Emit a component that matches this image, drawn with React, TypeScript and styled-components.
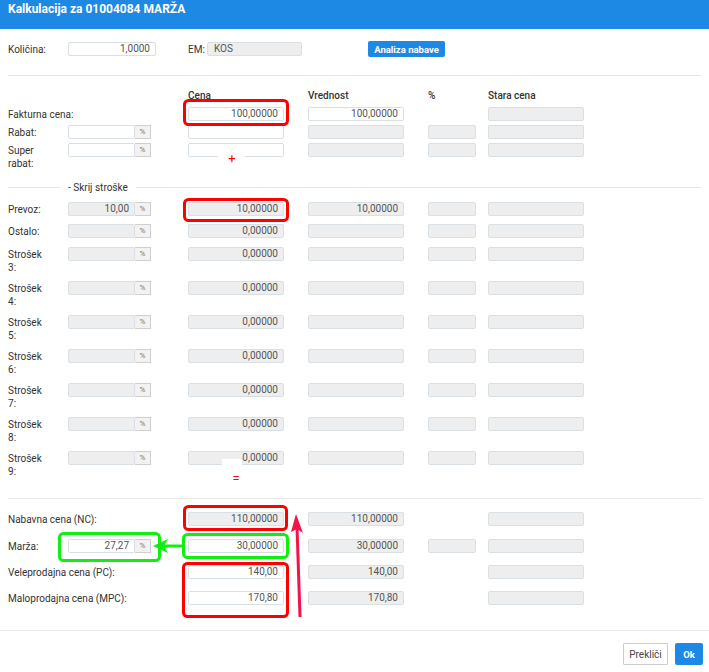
import React from 'react';
import styled, { createGlobalStyle } from 'styled-components';

const GlobalStyle = createGlobalStyle`
  html, body {
    margin: 0;
    padding: 0;
    background: #fff;
  }
  body {
    font-family: Roboto, 'Liberation Sans', Arial, sans-serif;
    color: #333;
  }
`;

const BLUE = '#1e88e5';

const Page = styled.div`
  position: relative;
  width: 709px;
  height: 672px;
  overflow: hidden;
  display: flex;
  flex-direction: column;
  background: #fff;
`;

const Header = styled.div`
  height: 29px;
  box-sizing: border-box;
  padding: 1px 8px 0;
  background: ${BLUE};
  color: #fff;
  font-size: 12px;
  font-weight: 700;
  line-height: 16px;
`;

const Body = styled.div`
  flex: 1;
  padding: 12px 8px 0;
`;

const TopRow = styled.div`
  display: flex;
  align-items: center;
  height: 16px;
  font-size: 10px;
`;

const TopLabel = styled.span<{ $w: number; $ml?: number }>`
  width: ${({ $w }) => $w}px;
  margin-left: ${({ $ml }) => $ml ?? 0}px;
  flex-shrink: 0;
`;

const Field = styled.div<{ $gray?: boolean; $w?: number; $left?: boolean }>`
  box-sizing: border-box;
  width: ${({ $w }) => $w ?? 96}px;
  height: 14px;
  border: 1px solid #d8dfe5;
  border-radius: 2px;
  background: ${({ $gray }) => ($gray ? '#eeeeee' : '#fff')};
  color: #555;
  font-size: 10px;
  line-height: 12px;
  text-align: ${({ $left }) => ($left ? 'left' : 'right')};
  padding: 0 5px 0 ${({ $left }) => ($left ? 6 : 5)}px;
  white-space: nowrap;
  overflow: hidden;
`;

const BlueButton = styled.div<{ $w: number; $h: number; $ml?: number }>`
  box-sizing: border-box;
  width: ${({ $w }) => $w}px;
  height: ${({ $h }) => $h}px;
  margin-left: ${({ $ml }) => $ml ?? 0}px;
  background: ${BLUE};
  border-radius: 2px;
  color: #fff;
  font-size: 9.5px;
  font-weight: 700;
  display: flex;
  align-items: center;
  justify-content: center;
`;

const Divider = styled.div<{ $mt: number; $mb: number }>`
  height: 1px;
  background: #e6e6e6;
  margin: ${({ $mt }) => $mt}px 0 ${({ $mb }) => $mb}px;
`;

const Row = styled.div<{ $mb: number }>`
  display: grid;
  grid-template-columns: 60px 120px 120px 120px 60px 96px;
  align-items: start;
  margin-bottom: ${({ $mb }) => $mb}px;
  font-size: 10px;
`;

const Cell = styled.div<{ $col: number; $span?: number }>`
  grid-column: ${({ $col, $span }) => `${$col} / span ${$span ?? 1}`};
  grid-row: 1;
`;

const Label = styled.div`
  line-height: 13px;
  padding-top: 1px;
  margin-bottom: -1px;
  color: #333;
  white-space: nowrap;
`;

const ColHead = styled.div`
  font-weight: 500;
  line-height: 13px;
  color: #333;
`;

const PctWrap = styled.div`
  display: flex;
  width: 83px;
`;

const Addon = styled.div`
  box-sizing: border-box;
  width: 16px;
  height: 14px;
  border: 1px solid #cfcfcf;
  border-left: none;
  background: #f2f2f2;
  color: #777;
  font-size: 8px;
  line-height: 12px;
  text-align: center;
`;

const Legend = styled.div`
  display: flex;
  align-items: center;
  height: 14px;
  margin-bottom: 8px;
  font-size: 10px;
`;

const LegendLine = styled.div<{ $w?: number }>`
  height: 1px;
  background: #e6e6e6;
  width: ${({ $w }) => ($w ? `${$w}px` : 'auto')};
  flex: ${({ $w }) => ($w ? '0 0 auto' : '1')};
`;

const LegendText = styled.span`
  margin: 0 8px;
  color: #333;
`;

const Footer = styled.div`
  border-top: 1px solid #e6e6e6;
  padding: 12px 6px 7px;
  display: flex;
  justify-content: flex-end;
  gap: 7px;
`;

const CancelButton = styled.div`
  box-sizing: border-box;
  width: 45px;
  height: 22px;
  border: 1px solid #cccccc;
  border-radius: 1px;
  background: #fff;
  color: #444;
  font-size: 10px;
  display: flex;
  align-items: center;
  justify-content: center;
`;

const Overlay = styled.svg`
  position: absolute;
  left: 0;
  top: 0;
  pointer-events: none;
`;

type Val = string | null | undefined;

interface LineProps {
  label: React.ReactNode;
  wide?: boolean;
  mb: number;
  pct?: { value?: string; gray?: boolean };
  cena?: { value?: string; gray?: boolean };
  vrednost?: { value?: string; gray?: boolean };
  pctCol?: boolean;
  stara?: boolean;
}

const Line: React.FC<LineProps> = ({ label, wide, mb, pct, cena, vrednost, pctCol, stara = true }) => (
  <Row $mb={mb}>
    <Cell $col={1} $span={wide ? 2 : 1}>
      <Label>{label}</Label>
    </Cell>
    {pct && (
      <Cell $col={2}>
        <PctWrap>
          <Field $w={67} $gray={pct.gray}>{pct.value as Val}</Field>
          <Addon>%</Addon>
        </PctWrap>
      </Cell>
    )}
    {cena && (
      <Cell $col={3}>
        <Field $gray={cena.gray}>{cena.value as Val}</Field>
      </Cell>
    )}
    {vrednost && (
      <Cell $col={4}>
        <Field $gray={vrednost.gray}>{vrednost.value as Val}</Field>
      </Cell>
    )}
    {pctCol && (
      <Cell $col={5}>
        <Field $w={48} $gray />
      </Cell>
    )}
    {stara && (
      <Cell $col={6}>
        <Field $gray />
      </Cell>
    )}
  </Row>
);

const costs = [3, 4, 5, 6, 7, 8, 9];

const App: React.FC = () => {
  return (
    <>
      <GlobalStyle />
      <Page>
        <Header>Kalkulacija za 01004084 MARŽA</Header>
        <Body>
          <TopRow>
            <TopLabel $w={60}>Količina:</TopLabel>
            <Field $w={88}>1,0000</Field>
            <TopLabel $w={19} $ml={32}>EM:</TopLabel>
            <Field $w={95} $gray $left>
              KOS
            </Field>
            <BlueButton $w={77} $h={16} $ml={66}>
              Analiza nabave
            </BlueButton>
          </TopRow>

          <Divider $mt={18} $mb={13} />

          <Row $mb={5}>
            <Cell $col={3}>
              <ColHead>Cena</ColHead>
            </Cell>
            <Cell $col={4}>
              <ColHead>Vrednost</ColHead>
            </Cell>
            <Cell $col={5}>
              <ColHead>%</ColHead>
            </Cell>
            <Cell $col={6}>
              <ColHead>Stara cena</ColHead>
            </Cell>
          </Row>

          <Line
            label="Fakturna cena:"
            wide
            mb={4}
            cena={{ value: '100,00000' }}
            vrednost={{ value: '100,00000' }}
          />
          <Line
            label="Rabat:"
            mb={4}
            pct={{}}
            cena={{}}
            vrednost={{ gray: true }}
            pctCol
          />
          <Line
            label={
              <>
                Super
                <br />
                rabat:
              </>
            }
            mb={11}
            pct={{}}
            cena={{}}
            vrednost={{ gray: true }}
            pctCol
          />

          <Legend>
            <LegendLine $w={52} />
            <LegendText>- Skrij stroške</LegendText>
            <LegendLine />
          </Legend>

          <Line
            label="Prevoz:"
            mb={8}
            pct={{ value: '10,00', gray: true }}
            cena={{ value: '10,00000', gray: true }}
            vrednost={{ value: '10,00000', gray: true }}
            pctCol
          />
          <Line
            label="Ostalo:"
            mb={9}
            pct={{ gray: true }}
            cena={{ value: '0,00000', gray: true }}
            vrednost={{ gray: true }}
            pctCol
          />
          {costs.map(n => (
            <Line
              key={n}
              label={
                <>
                  Strošek
                  <br />
                  {n}:
                </>
              }
              mb={n === 9 ? 0 : 8}
              pct={{ gray: true }}
              cena={{ value: '0,00000', gray: true }}
              vrednost={{ gray: true }}
              pctCol
            />
          ))}

          <Divider $mt={21} $mb={13} />

          <Line
            label="Nabavna cena (NC):"
            wide
            mb={13}
            cena={{ value: '110,00000', gray: true }}
            vrednost={{ value: '110,00000', gray: true }}
          />
          <Line
            label="Marža:"
            mb={12}
            pct={{ value: '27,27' }}
            cena={{ value: '30,00000' }}
            vrednost={{ value: '30,00000', gray: true }}
            pctCol
          />
          <Line
            label="Veleprodajna cena (PC):"
            wide
            mb={12}
            cena={{ value: '140,00' }}
            vrednost={{ value: '140,00', gray: true }}
          />
          <Line
            label="Maloprodajna cena (MPC):"
            wide
            mb={0}
            cena={{ value: '170,80' }}
            vrednost={{ value: '170,80', gray: true }}
          />
        </Body>
        <Footer>
          <CancelButton>Prekliči</CancelButton>
          <BlueButton $w={28} $h={22}>
            Ok
          </BlueButton>
        </Footer>

        <Overlay width="709" height="672" viewBox="0 0 709 672">
          <g fill="none" strokeWidth="3">
            <rect x="184.5" y="100.5" width="103" height="24" rx="4" stroke="#ff0000" />
            <rect x="184.5" y="199.5" width="103" height="21" rx="4" stroke="#ff0000" />
            <rect x="184.5" y="506.5" width="102" height="23" rx="4" stroke="#ff0000" />
            <rect x="183.5" y="563.5" width="104" height="53" rx="4" stroke="#ff0000" />
            <rect x="183.5" y="534.5" width="104" height="23" rx="4" stroke="#11ee11" />
            <rect x="59.5" y="533.5" width="100" height="27" rx="4" stroke="#11ee11" />
          </g>
          <line x1="164" y1="546" x2="182" y2="546" stroke="#11ee11" strokeWidth="3" />
          <polygon points="153,546 168,539 164,546 168,553" fill="#11ee11" />
          <line x1="300" y1="617" x2="297" y2="527" stroke="#f5124a" strokeWidth="3" />
          <polygon points="296,514 303,533 297,529 291,532" fill="#f5124a" />

          <rect x="218" y="148" width="27" height="20" fill="#fff" />
          <text x="232" y="163" fill="#ff0000" fontSize="13" textAnchor="middle" fontFamily="Roboto, sans-serif">
            +
          </text>
          <rect x="222" y="459" width="20" height="12" fill="#fff" />
          <text x="236" y="483" fill="#ff0000" fontSize="13" textAnchor="middle" fontFamily="Roboto, sans-serif">
            =
          </text>
        </Overlay>
      </Page>
    </>
  );
};

export default App;
